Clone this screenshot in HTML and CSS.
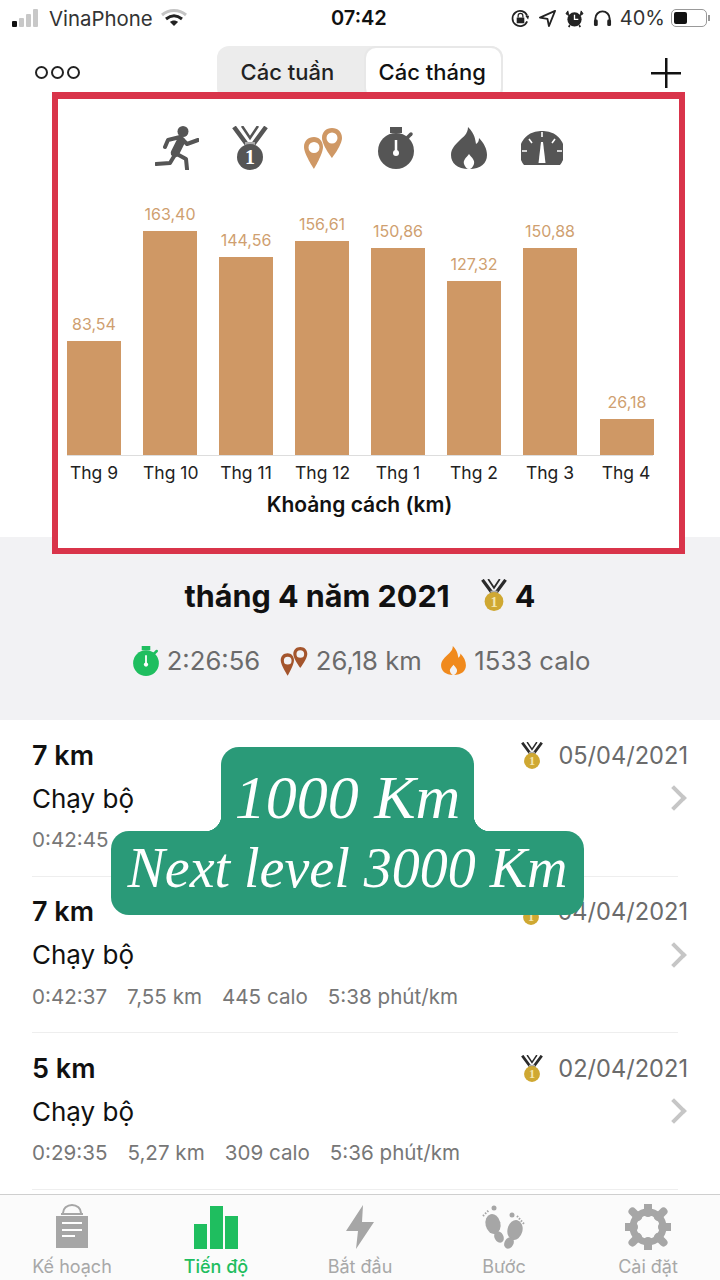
FILE: index.html
```html
<!DOCTYPE html>
<html lang="en">
<head>
  <meta charset="UTF-8">
  <meta name="viewport" content="width=device-width, initial-scale=1.0">
  <title>Tiến độ</title>
  <link rel="stylesheet" href="styles.css">
</head>
<body>
  <svg class="defs" width="0" height="0">
    <symbol id="ribbon" viewBox="0 0 36 44">
      <path d="M2 1 L16 20 M34 1 L20 20" stroke="currentColor" stroke-width="4.500" fill="none"/>
      <path d="M10 0 L18 12 L26 0" stroke="currentColor" stroke-width="2.500" fill="none"/>
      <rect x="13" y="16" width="10" height="3" fill="#aaa"/>
    </symbol>
    <symbol id="runner" viewBox="0 0 44 44">
      <circle cx="28" cy="5.500" r="5.500" fill="currentColor"/>
      <path d="M26 15 L20 27" stroke="currentColor" stroke-width="8.500" stroke-linecap="round" fill="none"/>
      <path d="M10 21 L13 14 L25 11 L32 18 L43 14 M20 27 L31 33 L32 43 M21 27 L15 37 L1 38" stroke="currentColor" stroke-width="4" stroke-linecap="round" stroke-linejoin="round" fill="none"/>
    </symbol>
    <symbol id="pins" viewBox="0 0 40 42">
      <path fill-rule="evenodd" fill="currentColor" d="M11 10 C5 10 1 14 1 20 C1 27 11 42 11 42 C11 42 20 27 20 20 C20 14 16 10 11 10Z M11 15 A5.500 5.500 0 1 1 11 26 A5.500 5.500 0 1 1 11 15Z"/>
      <path fill-rule="evenodd" fill="currentColor" d="M29 1 C23 1 19 5 19 11 C19 18 29 31 29 31 C29 31 39 18 39 11 C39 5 35 1 29 1Z M29 5.500 A5.500 5.500 0 1 1 29 16.500 A5.500 5.500 0 1 1 29 5.500Z"/>
    </symbol>
    <symbol id="watch" viewBox="0 0 36 42">
      <rect x="12" y="0" width="12" height="6" fill="currentColor"/>
      <path d="M29 11 L33 7" stroke="currentColor" stroke-width="3.500" stroke-linecap="round"/>
      <circle cx="18" cy="24" r="18" fill="currentColor"/>
      <path d="M18 13 L18 25" stroke="#fff" stroke-width="2.500"/>
      <circle cx="18" cy="26" r="3" fill="#fff"/>
    </symbol>
    <symbol id="flame" viewBox="0 0 36 42">
      <path fill="currentColor" fill-rule="evenodd" d="M17 0 C24 7 24 12 25 17 C27 16 28 14 28 11 C33 16 36 22 36 28 C36 36 30 42 18 42 C6 42 0 36 0 28 C0 22 4 18 8 14 C12 10 17 7 17 0Z M18 27 C21 31 24 33 23 37 C22 40 20 42 18 42 C16 42 14 40 13 37 C12 33 15 31 18 27Z"/>
    </symbol>
    <symbol id="gauge" viewBox="0 0 42 36">
      <path fill="currentColor" d="M3 35 A21 21 0 0 1 21 1 A21 21 0 0 1 39 35Z"/>
      <path d="M21 2 V7 M8 9 L11 13 M34 9 L31 13 M1 21 H6 M41 21 H36" stroke="#fff" stroke-width="1.600"/>
      <path fill="#fff" d="M20 12 H22 L24.500 33 H17.500Z"/>
    </symbol>
  </svg>

  <div class="status-bar">
    <div class="status-left">
      <span class="signal"><i class="on"></i><i></i><i></i><i></i></span>
      <span class="carrier">VinaPhone</span>
      <svg class="wifi" viewBox="0 0 26 18" width="26" height="18">
        <path d="M1 6 C8 0 18 0 25 6" stroke="#c4c4c4" stroke-width="3" fill="none"/>
        <path d="M5 10 C10 6 16 6 21 10" stroke="#222" stroke-width="3" fill="none"/>
        <path d="M9 13 C11 11 15 11 17 13 L13 17Z" fill="#222"/>
      </svg>
    </div>
    <div class="status-time">07:42</div>
    <div class="status-right">
      <svg viewBox="0 0 20 20" width="19" height="19">
        <path d="M17 13 A8 8 0 1 1 17 7" stroke="#222" stroke-width="1.800" fill="none"/>
        <path d="M15 7 L19 7 L18 11Z" fill="#222"/>
        <rect x="6" y="9" width="8" height="6" fill="#222"/>
        <path d="M7.500 9 V7 A2.500 2.500 0 0 1 12.500 7 V9" stroke="#222" stroke-width="1.300" fill="none"/>
      </svg>
      <svg viewBox="0 0 18 18" width="17" height="17">
        <path d="M17 1 L1 8 L9 9.500 L10.500 17Z" stroke="#222" stroke-width="1.900" fill="none" stroke-linejoin="round"/>
      </svg>
      <svg viewBox="0 0 20 20" width="19" height="19">
        <circle cx="10" cy="11" r="7.500" fill="#222"/>
        <path d="M3 2 L1 5 L4 7 Z M17 2 L19 5 L16 7 Z" fill="#222" stroke="#222"/>
        <path d="M10 6 V11 H14" stroke="#fff" stroke-width="1.400" fill="none"/>
        <path d="M5 17 L4 19 M15 17 L16 19" stroke="#222" stroke-width="1.800"/>
      </svg>
      <svg viewBox="0 0 20 20" width="19" height="19">
        <path d="M2.500 13 V10 A7.500 7.500 0 0 1 17.500 10 V13" stroke="#222" stroke-width="2" fill="none"/>
        <rect x="1" y="11" width="4" height="7" rx="1.500" fill="#222"/>
        <rect x="15" y="11" width="4" height="7" rx="1.500" fill="#222"/>
      </svg>
      <span class="battery-text">40%</span>
      <span class="battery"><i></i></span>
      <span class="battery-cap"></span>
    </div>
  </div>

  <div class="nav">
    <div class="dots"><i></i><i></i><i></i></div>
    <div class="tabs">
      <div class="tab">Các tuần</div>
      <div class="tab tab-active">Các tháng</div>
    </div>
    <div class="plus"></div>
  </div>

  <div class="chart-frame">
    <div class="metrics">
      <span class="metric"><svg width="44" height="44"><use href="#runner"/></svg></span>
      <span class="metric">
        <svg class="medal" viewBox="0 0 36 44" width="36" height="44">
          <use href="#ribbon" width="36" height="44"/>
          <circle cx="18" cy="31" r="13" fill="currentColor"/>
          <text x="18" y="38" class="medal-num" text-anchor="middle">1</text>
        </svg>
      </span>
      <span class="metric metric-active"><svg width="40" height="42"><use href="#pins"/></svg></span>
      <span class="metric"><svg width="36" height="42"><use href="#watch"/></svg></span>
      <span class="metric"><svg width="36" height="42"><use href="#flame"/></svg></span>
      <span class="metric"><svg width="42" height="36"><use href="#gauge"/></svg></span>
    </div>
    <div class="bars">
      <div class="bar-col"><span class="bar-value">83,54</span><div class="bar" style="height: 114px"></div></div>
      <div class="bar-col"><span class="bar-value">163,40</span><div class="bar" style="height: 224px"></div></div>
      <div class="bar-col"><span class="bar-value">144,56</span><div class="bar" style="height: 198px"></div></div>
      <div class="bar-col"><span class="bar-value">156,61</span><div class="bar" style="height: 214px"></div></div>
      <div class="bar-col"><span class="bar-value">150,86</span><div class="bar" style="height: 207px"></div></div>
      <div class="bar-col"><span class="bar-value">127,32</span><div class="bar" style="height: 174px"></div></div>
      <div class="bar-col"><span class="bar-value">150,88</span><div class="bar" style="height: 207px"></div></div>
      <div class="bar-col"><span class="bar-value">26,18</span><div class="bar" style="height: 36px"></div></div>
    </div>
    <div class="bar-labels">
      <span>Thg 9</span><span>Thg 10</span><span>Thg 11</span><span>Thg 12</span><span>Thg 1</span><span>Thg 2</span><span>Thg 3</span><span>Thg 4</span>
    </div>
    <div class="chart-title">Khoảng cách (km)</div>
  </div>

  <div class="summary">
    <div class="summary-head">
      <span class="summary-month">tháng 4 năm 2021</span>
      <svg class="medal-gold" viewBox="0 0 36 44" width="26" height="32">
        <use href="#ribbon" width="36" height="44"/>
        <circle cx="18" cy="31" r="13" fill="#cfa832"/>
        <text x="18" y="38" class="medal-num medal-num-light" text-anchor="middle">1</text>
      </svg>
      <span class="summary-count">4</span>
    </div>
    <div class="summary-stats">
      <span class="stat stat-time"><svg width="26" height="30"><use href="#watch"/></svg>2:26:56</span>
      <span class="stat stat-dist"><svg width="28" height="30"><use href="#pins"/></svg>26,18 km</span>
      <span class="stat stat-cal"><svg width="25" height="29"><use href="#flame"/></svg>1533 calo</span>
    </div>
  </div>

  <div class="list">
    <div class="row">
      <div class="row-top">
        <span class="row-title">7 km</span>
        <span class="row-date">
          <svg class="medal-gold" viewBox="0 0 36 44" width="22" height="27">
            <use href="#ribbon" width="36" height="44"/>
            <circle cx="18" cy="31" r="13" fill="#cfa832"/>
            <text x="18" y="38" class="medal-num medal-num-light" text-anchor="middle">1</text>
          </svg>05/04/2021</span>
      </div>
      <div class="row-mid"><span>Chạy bộ</span><i class="chevron"></i></div>
      <div class="row-meta"><span>0:42:45</span></div>
    </div>
    <div class="row">
      <div class="row-top">
        <span class="row-title">7 km</span>
        <span class="row-date">
          <svg class="medal-gold" viewBox="0 0 36 44" width="22" height="27">
            <use href="#ribbon" width="36" height="44"/>
            <circle cx="18" cy="31" r="13" fill="#cfa832"/>
            <text x="18" y="38" class="medal-num medal-num-light" text-anchor="middle">1</text>
          </svg>04/04/2021</span>
      </div>
      <div class="row-mid"><span>Chạy bộ</span><i class="chevron"></i></div>
      <div class="row-meta"><span>0:42:37</span><span>7,55 km</span><span>445 calo</span><span>5:38 phút/km</span></div>
    </div>
    <div class="row">
      <div class="row-top">
        <span class="row-title">5 km</span>
        <span class="row-date">
          <svg class="medal-gold" viewBox="0 0 36 44" width="22" height="27">
            <use href="#ribbon" width="36" height="44"/>
            <circle cx="18" cy="31" r="13" fill="#cfa832"/>
            <text x="18" y="38" class="medal-num medal-num-light" text-anchor="middle">1</text>
          </svg>02/04/2021</span>
      </div>
      <div class="row-mid"><span>Chạy bộ</span><i class="chevron"></i></div>
      <div class="row-meta"><span>0:29:35</span><span>5,27 km</span><span>309 calo</span><span>5:36 phút/km</span></div>
    </div>
  </div>

  <div class="tabbar">
    <div class="tabbar-item">
      <svg viewBox="0 0 36 46" width="36" height="46">
        <path d="M9 9 A9 8 0 0 1 27 9" stroke="#a6a6a6" stroke-width="2" fill="none"/>
        <path d="M2 12 H34 V44 H2Z" fill="#a6a6a6"/>
        <path d="M7 10 H29" stroke="#a6a6a6" stroke-width="2"/>
        <path d="M8 19 H28 M8 26 H28 M8 32 H21" stroke="#fff" stroke-width="2"/>
      </svg>
      <span>Kế hoạch</span>
    </div>
    <div class="tabbar-item tabbar-active">
      <svg viewBox="0 0 44 46" width="44" height="46">
        <rect x="0" y="20" width="13" height="25" fill="#1fbe5f"/>
        <rect x="16" y="2" width="13" height="43" fill="#1fbe5f"/>
        <rect x="31" y="12" width="13" height="33" fill="#1fbe5f"/>
      </svg>
      <span>Tiến độ</span>
    </div>
    <div class="tabbar-item">
      <svg viewBox="0 0 30 46" width="30" height="46">
        <path d="M18 1 L1 27 H13 L11 45 L29 18 H17Z" fill="#a6a6a6"/>
      </svg>
      <span>Bắt đầu</span>
    </div>
    <div class="tabbar-item">
      <svg viewBox="0 0 44 46" width="44" height="46">
        <ellipse cx="11" cy="20" rx="7.500" ry="10" transform="rotate(-14 11 20)" fill="#a6a6a6"/>
        <ellipse cx="17" cy="33" rx="4.500" ry="6" transform="rotate(-28 17 33)" fill="#a6a6a6"/>
        <ellipse cx="33" cy="26" rx="7.500" ry="10" transform="rotate(14 33 26)" fill="#a6a6a6"/>
        <ellipse cx="27" cy="39" rx="4.500" ry="6" transform="rotate(28 27 39)" fill="#a6a6a6"/>
        <circle cx="12" cy="4" r="2.500" fill="#a6a6a6"/>
        <path d="M1 12 L7 6" stroke="#a6a6a6" stroke-width="2" stroke-dasharray="1.500 1.500"/>
        <circle cx="30" cy="11" r="2.500" fill="#a6a6a6"/>
        <path d="M35 12 L42 20" stroke="#a6a6a6" stroke-width="2" stroke-dasharray="1.500 1.500"/>
      </svg>
      <span>Bước</span>
    </div>
    <div class="tabbar-item">
      <svg viewBox="0 0 46 46" width="46" height="46">
        <circle cx="23" cy="23" r="15" stroke="#a6a6a6" stroke-width="7" fill="none"/>
        <path d="M23 1 V9 M23 37 V45 M1 23 H9 M37 23 H45 M7.500 7.500 L13 13 M33 33 L38.500 38.500 M38.500 7.500 L33 13 M13 33 L7.500 38.500" stroke="#a6a6a6" stroke-width="8" stroke-linecap="round"/>
      </svg>
      <span>Cài đặt</span>
    </div>
  </div>

  <div class="sticker">
    <div class="sticker-top">1000 Km</div>
    <div class="sticker-bottom">Next level 3000 Km</div>
  </div>
</body>
</html>
```

FILE: styles.css
```css
:root {
  --bar: #cf9865;
  --red: #d9344a;
  --green: #1fbe5f;
  --sticker: #2a9a78;
  --grey-text: #6b6b6b;
}

* {
  box-sizing: border-box;
}

body {
  font-family: 'Inter', 'Liberation Sans', sans-serif;
  background-color: white;
  color: #111;
  margin: 0;
  width: 720px;
  height: 1280px;
  overflow: hidden;
  position: relative;
}

.defs {
  position: absolute;
}

svg {
  display: block;
  flex: none;
}

.medal {
  color: #555;
}

.medal-gold {
  color: #2b2b2b;
}

.medal-num {
  font-family: 'Liberation Serif', serif;
  font-weight: 700;
  font-size: 20px;
  fill: white;
}

.medal-num-light {
  fill: #f3e6b0;
}

/* status bar */
.status-bar {
  height: 38px;
  display: flex;
  align-items: center;
  justify-content: space-between;
  padding: 0 10px 2px 12px;
  position: relative;
  font-size: 20px;
  color: #333;
}

.status-left,
.status-right {
  display: flex;
  align-items: center;
}

.signal {
  display: flex;
  align-items: flex-end;
  gap: 2px;
  margin-right: 11px;
  height: 18px;
}

.signal i {
  width: 5px;
  background-color: #c8c8c8;
  border-radius: 1px;
}

.signal i:nth-child(1) { height: 6px; background-color: #111; }
.signal i:nth-child(2) { height: 9px; }
.signal i:nth-child(3) { height: 13px; }
.signal i:nth-child(4) { height: 18px; }

.carrier {
  margin-right: 8px;
  font-size: 20.400px;
}

.status-time {
  position: absolute;
  left: 331px;
  top: 6px;
  font-weight: 600;
  color: #111;
}

.status-right {
  gap: 9px;
}

.battery-text {
  margin-left: -1px;
}

.battery {
  width: 36px;
  height: 18px;
  border: 1.5px solid #999;
  border-radius: 5px;
  padding: 2px;
  margin-left: -3px;
  display: flex;
}

.battery i {
  width: 13px;
  background-color: #111;
  border-radius: 2px;
}

.battery-cap {
  width: 2px;
  height: 6px;
  background-color: #999;
  margin-left: -8px;
}

/* nav with the segmented control */
.nav {
  height: 54px;
  position: relative;
  display: flex;
  justify-content: center;
}

.dots {
  position: absolute;
  left: 35px;
  top: 28px;
  display: flex;
  gap: 3px;
}

.dots i {
  width: 13px;
  height: 13px;
  border: 2px solid #222;
  border-radius: 50%;
}

.plus {
  position: absolute;
  left: 651px;
  top: 20px;
  width: 30px;
  height: 30px;
  background:
    linear-gradient(#111, #111) center / 30px 2.5px no-repeat,
    linear-gradient(#111, #111) center / 2.5px 30px no-repeat;
}

.tabs {
  width: 286px;
  height: 54px;
  margin-top: 8px;
  margin-left: -1px;
  background-color: #ececec;
  border-radius: 12px;
  display: flex;
}

.tab {
  font-size: 22px;
  line-height: 52px;
  padding-left: 24px;
  width: 147px;
  color: #222;
  font-weight: 500;
}

.tab-active {
  background-color: white;
  width: 139px;
  padding-left: 13px;
  border: 2px solid #e8e8e8;
  border-radius: 12px;
  line-height: 48px;
  color: #111;
}

/* chart */
.chart-frame {
  position: relative;
  z-index: 1;
  margin: 0 35px -17px 52px;
  height: 462px;
  background-color: white;
  border: 6px solid var(--red);
  border-top-width: 7px;
}

.metrics {
  display: flex;
  justify-content: center;
  height: 58px;
  padding-top: 0;
  margin-top: 27px;
  padding-right: 18px;
}

.metric {
  width: 73px;
  height: 44px;
  display: flex;
  align-items: center;
  justify-content: center;
  color: #555;
}

.metric-active {
  color: var(--bar);
}

.bars {
  height: 273px;
  margin: -1px 26px 0 9px;
  border-bottom: 1px solid #ddd;
  display: flex;
  align-items: flex-end;
  gap: 22px;
}

.bar-col {
  width: 54px;
  display: flex;
  flex-direction: column;
  align-items: center;
}

.bar-col:last-child {
  margin-left: 1px;
}

.bar {
  width: 54px;
  background-color: var(--bar);
}

.bar-value {
  font-size: 16px;
  line-height: 18px;
  margin-bottom: 8px;
  color: #cf9f70;
}

.bar-labels {
  display: flex;
  gap: 22px;
  margin: 7px 0 0 9px;
  font-size: 17.500px;
  line-height: 20px;
  color: #222;
}

.bar-labels span {
  width: 54px;
  text-align: center;
  white-space: nowrap;
}

.chart-title {
  text-align: center;
  font-size: 21px;
  font-weight: 600;
  line-height: 24px;
  margin-top: 10px;
  padding-right: 18px;
}

/* month summary */
.summary {
  background-color: #f2f2f4;
  height: 183px;
  padding-top: 40px;
}

.summary-head {
  display: flex;
  justify-content: center;
  align-items: center;
  height: 36px;
}

.summary-month {
  font-size: 30.500px;
  font-weight: 700;
  margin-right: 31px;
}

.summary-count {
  font-size: 30.500px;
  font-weight: 700;
  margin-left: 8px;
}

.summary-stats {
  display: flex;
  justify-content: center;
  margin-top: 32px;
  padding-left: 3px;
  gap: 19.500px;
  font-size: 25.700px;
  color: var(--grey-text);
}

.stat {
  display: flex;
  align-items: center;
  gap: 8px;
}

.stat-time { color: var(--grey-text); }
.stat-time svg { color: var(--green); }
.stat-dist svg { color: #a4552c; }
.stat-cal svg { color: #f08a1d; }

/* activity rows */
.list {
  padding: 0 32px;
}

.row {
  height: 156.5px;
  padding-top: 19px;
  border-bottom: 1px solid #eee;
  width: 646px;
}

.row-top {
  display: flex;
  justify-content: space-between;
  align-items: center;
  height: 32px;
  width: 656px;
}

.row-title {
  font-size: 27px;
  font-weight: 600;
}

.row-date {
  display: flex;
  align-items: center;
  gap: 15px;
  font-size: 23.600px;
  color: var(--grey-text);
}

.row-mid {
  display: flex;
  justify-content: space-between;
  align-items: center;
  width: 656px;
  height: 32px;
  margin-top: 11px;
  font-size: 26px;
}

.chevron {
  width: 18px;
  height: 18px;
  margin-right: 5px;
  border-top: 4px solid #c6c6c6;
  border-right: 4px solid #c6c6c6;
  transform: rotate(45deg);
}

.row-meta {
  display: flex;
  gap: 20px;
  margin-top: 14px;
  font-size: 20.600px;
  line-height: 24px;
  color: #777;
}

/* tab bar */
.tabbar {
  position: absolute;
  left: 0;
  right: 0;
  bottom: 0;
  height: 86px;
  background-color: #fbfbfb;
  border-top: 1.5px solid #cfcfcf;
  display: flex;
}

.tabbar-item {
  width: 144px;
  display: flex;
  flex-direction: column;
  align-items: center;
  padding-top: 9px;
  font-size: 18px;
  color: #a8a8a8;
}

.tabbar-item span {
  margin-top: 6px;
}

.tabbar-active {
  color: var(--green);
  font-weight: 500;
}

/* sticker on top of the list */
.sticker {
  position: absolute;
  left: 111px;
  top: 747px;
  width: 473px;
  z-index: 2;
  display: flex;
  flex-direction: column;
  align-items: center;
  font-family: 'Liberation Serif', serif;
  font-style: italic;
  color: white;
}

.sticker-top {
  width: 253px;
  height: 84px;
  background-color: var(--sticker);
  border-radius: 18px 18px 0 0;
  text-align: center;
  font-size: 62px;
  line-height: 100px;
  position: relative;
  white-space: nowrap;
}

.sticker-top::before,
.sticker-top::after {
  content: "";
  position: absolute;
  bottom: 0;
  width: 16px;
  height: 16px;
}

.sticker-top::before {
  left: -16px;
  background: radial-gradient(circle at 0 0, transparent 16px, var(--sticker) 16.5px);
}

.sticker-top::after {
  right: -16px;
  background: radial-gradient(circle at 100% 0, transparent 16px, var(--sticker) 16.5px);
}

.sticker-bottom {
  width: 473px;
  height: 84px;
  background-color: var(--sticker);
  border-radius: 18px;
  text-align: center;
  font-size: 56px;
  line-height: 74px;
  white-space: nowrap;
}
```
